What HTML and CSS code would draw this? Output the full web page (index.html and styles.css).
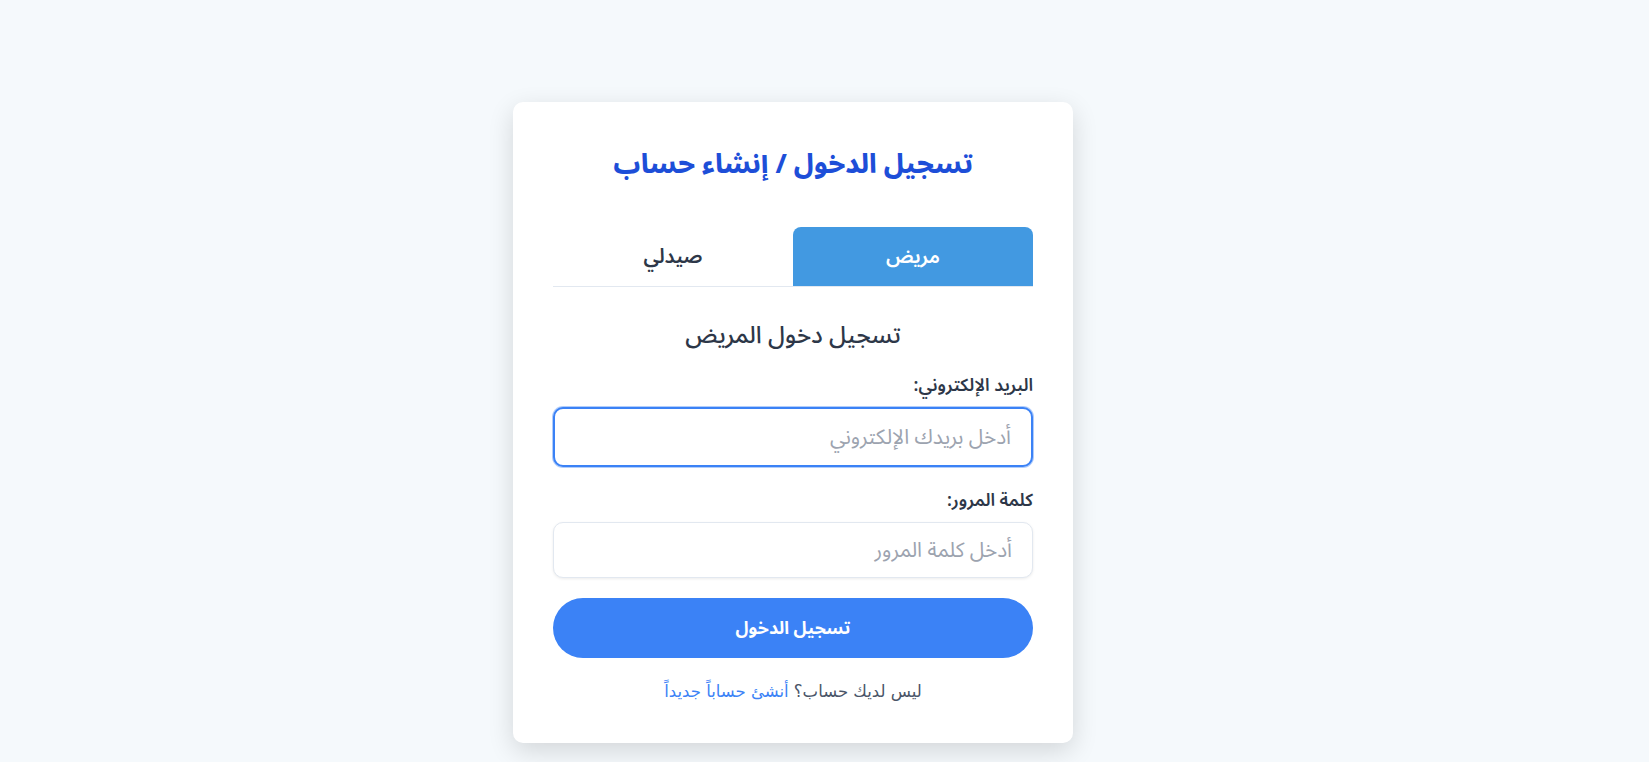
FILE: index.html
```html
<!DOCTYPE html>
<html lang="ar" dir="rtl">
<head>
<meta charset="utf-8">
<title>تسجيل الدخول</title>
<link rel="stylesheet" href="styles.css">
</head>
<body>
<main class="page">
  <section class="card">
    <h1 class="title">تسجيل الدخول / إنشاء حساب</h1>
    <div class="tabs">
      <button class="tab active" type="button">مريض</button>
      <button class="tab" type="button">صيدلي</button>
    </div>
    <h2 class="subtitle">تسجيل دخول المريض</h2>
    <form class="form">
      <div class="field">
        <label class="label" for="email">البريد الإلكتروني:</label>
        <input class="input is-focus" id="email" type="email" placeholder="أدخل بريدك الإلكتروني">
      </div>
      <div class="field">
        <label class="label" for="pass">كلمة المرور:</label>
        <input class="input" id="pass" type="password" placeholder="أدخل كلمة المرور">
      </div>
      <button class="submit" type="button">تسجيل الدخول</button>
    </form>
    <p class="footer">ليس لديك حساب؟ <a href="#" class="link">أنشئ حساباً جديداً</a></p>
  </section>
</main>
</body>
</html>
```

FILE: styles.css
```css
* { box-sizing: border-box; }
html, body { margin: 0; padding: 0; }
body {
  background: #f5f9fc;
  font-family: "Noto Sans Arabic", "Noto Sans", sans-serif;
  color: #2d3748;
}
.page {
  display: flex;
  justify-content: center;
  padding: 102px 63px 40px 0;
}
.card {
  width: 560px;
  background: #fff;
  border-radius: 10px;
  box-shadow: 0 8px 26px rgba(0, 0, 0, 0.14);
  padding: 42px 40px 39px;
}
.title {
  margin: 0;
  text-align: center;
  font-family: "Noto Sans Arabic", sans-serif;
  font-weight: 800;
  font-size: 26.6px;
  line-height: 42px;
  color: #1d4ed8;
}
.tabs {
  display: flex;
  margin-top: 41px;
  border-bottom: 1px solid #e2e8f0;
}
.tab {
  flex: 1;
  height: 59px;
  border: 0;
  background: transparent;
  font-family: "Noto Sans Arabic", sans-serif;
  font-size: 20px;
  font-weight: 600;
  color: #2d3748;
  border-radius: 8px 8px 0 0;
  cursor: pointer;
}
.tab.active {
  background: #4299e1;
  color: #fff;
}
.subtitle {
  margin: 31px 0 0;
  text-align: center;
  font-size: 24px;
  font-weight: 500;
  line-height: 36px;
  color: #2d3748;
}
.form { margin-top: 20px; }
.field { margin-bottom: 22px; }
.label {
  display: block;
  font-size: 17.6px;
  font-weight: 600;
  line-height: 24px;
  margin-bottom: 9px;
  color: #2d3748;
}
.input {
  display: block;
  width: 100%;
  height: 56px;
  border: 1px solid #e2e8f0;
  border-radius: 10px;
  padding: 0 20px;
  font-family: "Noto Sans Arabic", sans-serif;
  font-size: 20.8px;
  color: #2d3748;
  background: #fff;
  box-shadow: 0 1px 3px rgba(0, 0, 0, 0.08);
  outline: none;
}
.input::placeholder { color: #9ca3af; }
.input.is-focus {
  height: 60px;
  border: 2px solid #3b82f6;
  box-shadow: 0 0 0 1px rgba(59, 130, 246, 0.4);
}
.field + .field { margin-bottom: 20px; }
.submit {
  display: block;
  width: 100%;
  height: 60px;
  border: 0;
  border-radius: 30px;
  background: #3b82f6;
  color: #fff;
  font-family: "Noto Sans Arabic", sans-serif;
  font-size: 17.6px;
  font-weight: 700;
  cursor: pointer;
}
.footer {
  margin: 22px 0 0;
  text-align: center;
  font-family: "DejaVu Sans", sans-serif;
  font-size: 16.5px;
  line-height: 24px;
  color: #4a5568;
}
.link {
  color: #3b82f6;
  text-decoration: none;
}
```
